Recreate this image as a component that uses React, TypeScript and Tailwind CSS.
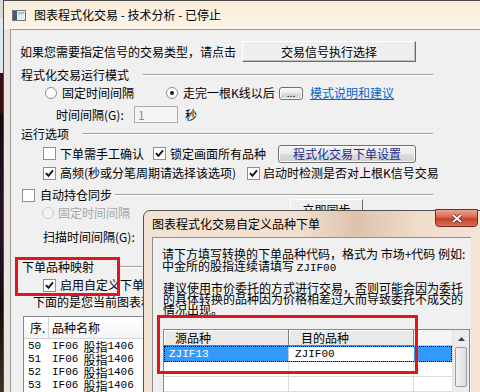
import React from 'react';

const mono = "font-['Liberation_Mono',monospace] text-[11px]";
const etched = 'h-[2px] flex-1 border-y border-t-[#a0a0a0] border-b-white';
const themedBtn =
  'rounded-[3px] border border-[#707070] bg-[linear-gradient(#f4f4f4_0%,#ebebeb_49%,#dddddd_50%,#cfcfcf_100%)] shadow-[inset_0_0_0_1px_#fbfbfb]';

const CheckBox: React.FC<{ checked?: boolean }> = ({ checked }) => (
  <span className="flex h-[13px] w-[13px] shrink-0 items-center justify-center border border-[#8f8f8f] bg-white">
    {checked && (
      <svg width="9" height="9" viewBox="0 0 9 9">
        <path d="M1 4.2 L3.4 6.9 L8 1.3" fill="none" stroke="#141414" strokeWidth="1.9" />
      </svg>
    )}
  </span>
);

const Radio: React.FC<{ checked?: boolean; disabled?: boolean }> = ({ checked, disabled }) => (
  <span
    className={`flex h-[12px] w-[12px] shrink-0 items-center justify-center rounded-full border ${
      disabled ? 'border-[#cbcbcb] bg-[#f3f3f3]' : 'border-[#8e8e8e] bg-white'
    }`}
  >
    {checked && <span className="h-[4px] w-[4px] rounded-full bg-[#1a1a1a]" />}
  </span>
);

interface HeaderProps {
  label: string;
  className: string;
  lineClass: string;
}

// group box caption with the etched line after it
const GroupHeader: React.FC<HeaderProps> = ({ label, className, lineClass }) => (
  <div className={`flex h-[14px] items-center ${className}`}>
    <span className="shrink-0 leading-[14px]">{label}</span>
    <span className={`${etched} ${lineClass}`} />
  </div>
);

const ListRow: React.FC<{ n: string }> = ({ n }) => (
  <div className="flex h-[13px] items-center leading-[13px]">
    <span className={`w-[25px] pl-[4px] ${mono}`}>{n}</span>
    <span className={`pl-[3px] ${mono}`}>IF06</span>
    <span className="ml-[5px]">股指</span>
    <span className={mono}>1406</span>
  </div>
);

export default function App() {
  return (
    <div className="relative flex h-[392px] w-[480px] overflow-hidden whitespace-nowrap bg-[#170b0f] font-['Noto_Sans_CJK_SC','Liberation_Sans',sans-serif] text-[12px] text-black">
      {/* desktop behind the window */}
      <div className="flex w-[3px] shrink-0 flex-col">
        <div className="h-[18px] bg-[#d9d9d9]" />
        <div className="h-[55px] bg-[#dfe7f0]" />
        <div className="h-[40px] bg-[#3a0d12]" />
        <div className="flex-1 bg-[linear-gradient(#120a0d,#2a1030_40%,#140b0c_70%,#3b3423)]" />
      </div>

      {/* main window */}
      <div className="flex flex-1 flex-col border-l border-t border-[#4b4b4b] bg-[#ebe6e0]">
        <div className="flex h-[28px] shrink-0 items-center bg-[linear-gradient(#f9ecda,#fdf4e7)] pl-[8px]">
          <svg width="14" height="11" viewBox="0 0 14 11">
            <rect x="0.5" y="0.5" width="13" height="10" fill="#e6ebf0" stroke="#6e7884" />
            <rect x="1" y="1" width="4" height="9" fill="#4f5a66" />
            <rect x="6" y="2" width="6" height="2" fill="#a9bccf" />
          </svg>
          <span className="ml-[8px] leading-[14px]">图表程式化交易 - 技术分析 - 已停止</span>
        </div>

        <div className="ml-[6px] flex-1 border-l border-t border-[#9a9a9a] bg-[#f0f0f0]">
          <div className="w-[422px]">
            <div className="mt-[11px] flex h-[21px] items-center pl-[9px]">
              <span className="w-[222px] shrink-0">如果您需要指定信号的交易类型，请点击</span>
              <button className="h-[21px] w-[174px] shrink-0 border border-b-[#6d6d6d] border-l-white border-r-[#6d6d6d] border-t-white bg-[#efefef] p-0 leading-[19px] shadow-[inset_-1px_-1px_0_#bdbdbd]">
                交易信号执行选择
              </button>
            </div>

            <GroupHeader label="程式化交易运行模式" className="mt-[6px] pl-[10px]" lineClass="ml-[14px]" />

            <div className="mt-[4px] flex h-[14px] items-center pl-[34px]">
              <div className="flex w-[121px] shrink-0 items-center">
                <Radio />
                <span className="ml-[5px]">固定时间间隔</span>
              </div>
              <Radio checked />
              <span className="ml-[5px] w-[96px] shrink-0">走完一根K线以后</span>
              <button className={`h-[13px] w-[24px] shrink-0 p-0 text-[10px] leading-[8px] ${themedBtn}`}>...</button>
              <a className="ml-[7px] text-[#0066cc] underline">模式说明和建议</a>
            </div>

            <div className="mt-[6px] flex h-[17px] items-center pl-[45px]">
              <span className="w-[78px] shrink-0">时间间隔(G):</span>
              <span className="h-[17px] w-[44px] shrink-0 border border-[#abadb3] bg-[#f4f4f4] pl-[3px] leading-[15px] text-[#8d8d8d]">
                1
              </span>
              <span className="ml-[7px]">秒</span>
            </div>

            <GroupHeader label="运行选项" className="mt-[4px] pl-[10px]" lineClass="ml-[13px]" />

            <div className="mt-[3px] flex h-[19px] items-center pl-[32px]">
              <div className="flex w-[110px] shrink-0 items-center">
                <CheckBox />
                <span className="ml-[4px]">下单需手工确认</span>
              </div>
              <div className="flex w-[125px] shrink-0 items-center">
                <CheckBox checked />
                <span className="ml-[4px]">锁定画面所有品种</span>
              </div>
              <button className={`h-[18px] w-[138px] shrink-0 p-0 leading-[16px] text-[#1d2c96] ${themedBtn}`}>
                程式化交易下单设置
              </button>
            </div>

            <div className="mt-[3px] flex h-[14px] items-center pl-[32px]">
              <div className="flex w-[204px] shrink-0 items-center">
                <CheckBox checked />
                <span className="ml-[4px]">高频(秒或分笔周期请选择该选项)</span>
              </div>
              <CheckBox checked />
              <span className="ml-[3px]">启动时检测是否对上根K信号交易</span>
            </div>

            <div className="mt-[8px] flex h-[14px] items-center pl-[11px]">
              <CheckBox />
              <span className="ml-[5px] shrink-0">自动持仓同步</span>
              <span className={`ml-[3px] ${etched}`} />
            </div>

            <div className="flex h-[22px] items-center pl-[31px]">
              <div className="flex w-[248px] shrink-0 items-center">
                <Radio disabled />
                <span className="ml-[4px] text-[#a6a6a6]">固定时间间隔</span>
              </div>
              <button className="-mt-[3px] h-[22px] w-[73px] shrink-0 self-start border border-b-[#6d6d6d] border-l-white border-r-[#6d6d6d] border-t-white bg-[#efefef] p-0">
                立即同步
              </button>
            </div>

            <div className="mt-[6px] flex h-[14px] items-center pl-[32px]">
              <span>扫描时间间隔(G):</span>
            </div>

            <GroupHeader label="下单品种映射" className="mt-[16px] pl-[11px]" lineClass="ml-[26px]" />

            <div className="mt-[4px] flex h-[14px] items-center pl-[32px]">
              <CheckBox checked />
              <span className="ml-[4px]">启用自定义下单品种映射</span>
            </div>

            <div className="mt-[3px] h-[14px] pl-[22px] leading-[14px]">下面的是您当前图表和下单品种的对应关系</div>

            <div className="ml-[12px] mt-[7px] h-[80px] w-[320px] border border-[#828790] bg-white">
              <div className="flex h-[22px] border-b border-[#d5d5d5] bg-[linear-gradient(#ffffff,#f3f4f6)] leading-[21px]">
                <span className="w-[25px] border-r border-[#d5d5d5] pl-[6px]">序.</span>
                <span className="pl-[3px]">品种名称</span>
              </div>
              <div className="pt-[1px]">
                {['50', '51', '52', '53'].map((n) => (
                  <ListRow key={n} n={n} />
                ))}
              </div>
            </div>
          </div>
        </div>
      </div>

      {/* custom symbol dialog */}
      <div className="absolute left-[143px] top-[210px] h-[190px] w-[345px] rounded-t-[7px] border border-[#525252] bg-[linear-gradient(90deg,#f3e3d4_0%,#f1dfcf_45%,#ddc3ae_62%,#efdccb_80%,#f4e5d7_100%)]">
        <div className="flex h-[26px] items-center pl-[8px] leading-[14px]">图表程式化交易自定义品种下单</div>
        <button className="absolute left-[291px] top-[-2px] flex h-[18px] w-[43px] items-center justify-center rounded-b-[4px] border border-[#7e2a1c] bg-[linear-gradient(#eba593_0%,#d8674e_45%,#c4402a_55%,#d5705a_100%)] p-0">
          <svg width="10" height="9" viewBox="0 0 10 9">
            <path d="M1 1 L9 8 M9 1 L1 8" stroke="#5a1a10" strokeWidth="3.2" />
            <path d="M1 1 L9 8 M9 1 L1 8" stroke="#ffffff" strokeWidth="2" />
          </svg>
        </button>

        <div className="ml-[8px] h-[170px] w-[319px] border-l border-t border-[#8f8f8f] bg-[#f0f0f0]">
          <div className="mt-[10px] pl-[9px] leading-[12px]">
            <div>请下方填写转换的下单品种代码，格式为 市场+代码 例如:</div>
            <div>
              中金所的股指连续请填写 <span className={mono}>ZJIF00</span>
            </div>
          </div>
          <div className="mt-[8px] pl-[10px] leading-[11px]">
            <div>建议使用市价委托的方式进行交易，否则可能会因为委托</div>
            <div>的具体转换的品种因为价格相差过大而导致委托不成交的</div>
            <div>情况出现。</div>
          </div>

          <div className="ml-[10px] mt-[14px] flex h-[70px] w-[307px] border border-[#828790] bg-white">
            <div className="flex-1">
              <div className="flex h-[16px] leading-[15px]">
                <span className="w-[125px] border-b border-r border-[#7c7c7c] bg-[#e9e9e9] pl-[11px] shadow-[inset_1px_1px_0_#ffffff]">
                  源品种
                </span>
                <span className="w-[125px] border-b border-r border-[#7c7c7c] bg-[#e9e9e9] pl-[12px] shadow-[inset_1px_1px_0_#ffffff]">
                  目的品种
                </span>
                <span className="flex-1 border-b border-[#c8c8c8] bg-[#f4f4f4]" />
              </div>
              <div className="flex h-[16px] border border-dotted border-black bg-[#3399ff] leading-[14px]">
                <span className={`w-[124px] border-r border-[#c8c8c8] pl-[4px] text-white ${mono}`}>ZJIF13</span>
                <span className={`w-[125px] bg-white pl-[6px] ${mono}`}>ZJIF00</span>
                <span className="flex-1" />
              </div>
              {[0, 1, 2].map((i) => (
                <div key={i} className="flex h-[15px] border-b border-[#dcdcdc]">
                  <span className="w-[125px] border-r border-[#dcdcdc]" />
                  <span className="w-[125px] border-r border-[#dcdcdc]" />
                </div>
              ))}
            </div>
            <div className="flex w-[17px] flex-col border-l border-[#e0e0e0] bg-[#ececec]">
              <div className="flex h-[17px] items-center justify-center">
                <svg width="7" height="4" viewBox="0 0 7 4">
                  <path d="M0 4 L3.5 0 L7 4 Z" fill="#404040" />
                </svg>
              </div>
              <div className="mx-[2px] h-[40px] rounded-[2px] border border-[#9b9b9b] bg-[linear-gradient(90deg,#f2f2f2,#dcdcdc)]" />
            </div>
          </div>
        </div>
      </div>

      {/* red annotation boxes */}
      <div className="absolute left-[15px] top-[257px] h-[39px] w-[105px] border-[3px] border-[#e3141b]" />
      <div className="absolute left-[157px] top-[315px] h-[59px] w-[261px] border-[3px] border-[#e3141b]" />
    </div>
  );
}
